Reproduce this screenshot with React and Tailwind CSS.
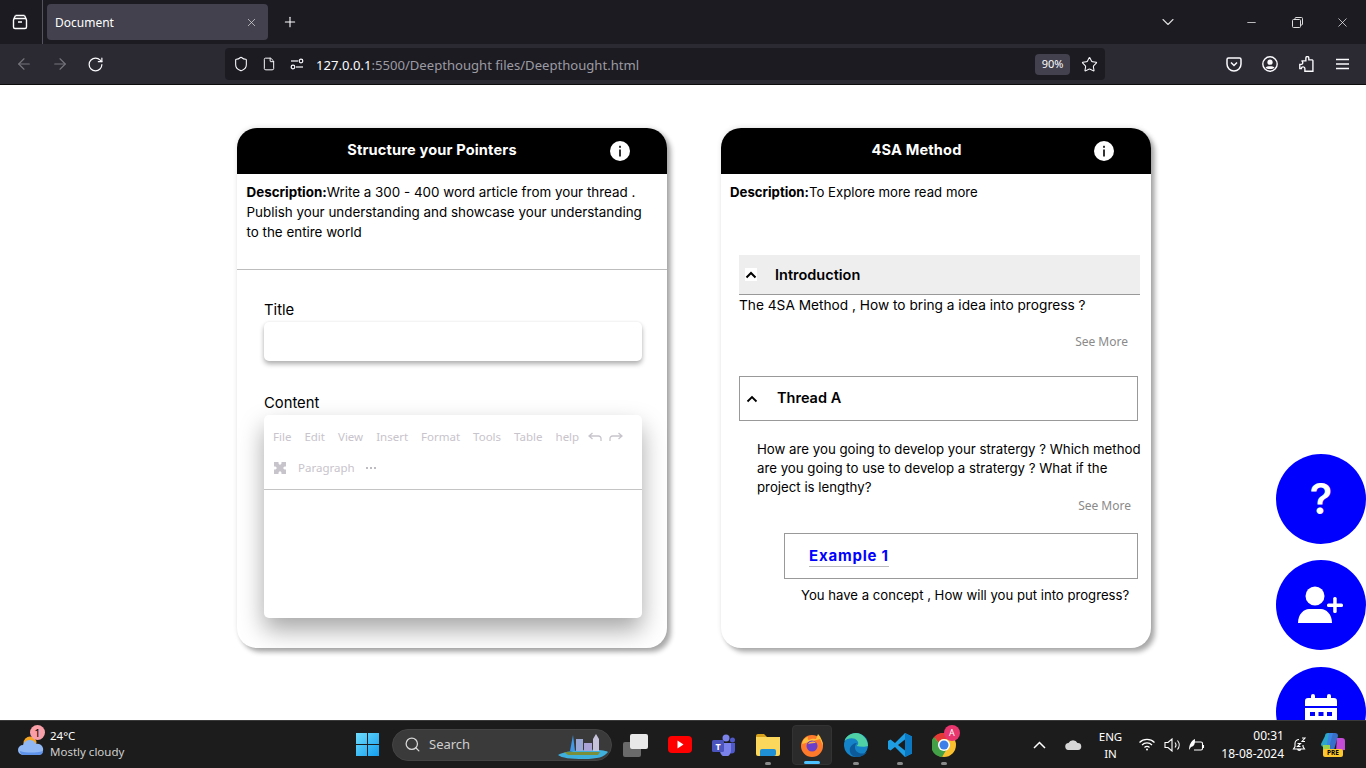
import React from "react";
import { ArrowLeft, ArrowRight, RotateCw, X, Plus, ChevronDown, Minus, Shield, File, Star, Search } from "lucide-react";

const sans = "font-['Inter','Liberation_Sans',sans-serif]";
const ui = "font-['Noto_Sans','Liberation_Sans',sans-serif]";

const Info = () => (
  <svg width="20" height="20" viewBox="0 0 20 20" className="shrink-0">
    <circle cx="10" cy="10" r="10" fill="#fff" />
    <rect x="9.200" y="8.500" width="1.600" height="7" fill="#000" />
    <rect x="9.200" y="4.800" width="1.600" height="2" fill="#000" />
  </svg>
);
const Chev = ({ w = 2 }) => (
  <svg width="12" height="8" viewBox="0 0 12 8" fill="none" stroke="#000" strokeWidth={w}><path d="M1.500 6.500 6 2l4.500 4.500" /></svg>
);

function CardHead({ title, pl }) {
  return (
    <div className="h-[46px] bg-black flex items-center pr-[37px] rounded-t-[20px] shrink-0" style={{ paddingLeft: pl }}>
      <div className="flex-1 text-center text-white text-[14.600px] font-bold tracking-[0.150px] pb-[1px]">{title}</div>
      <Info />
    </div>
  );
}

const Tab = ({ children }) => <span>{children}</span>;

function Browser() {
  return (
    <div className={`${ui} shrink-0`}>
      <div className="h-[44px] bg-[#1c1b22] flex items-center text-white">
        <div className="w-[43px] h-full border-r border-[#55545c] flex items-center justify-center pr-[3px] shrink-0">
          <svg width="18" height="18" viewBox="0 0 18 18" fill="none" stroke="#fff" strokeWidth="1.400"><rect x="2.500" y="5.500" width="13" height="10" rx="1.500" /><path d="M4.500 2.500h9M7 9h4" /><path d="M3 5.500 4.500 2.500M15 5.500l-1.500-3" /></svg>
        </div>
        <div className="ml-[4px] w-[221px] h-[36px] bg-[#42414d] rounded-[4px] flex items-center justify-between pl-[8px] pr-[10px] text-[12px] shrink-0">
          <span className="pt-[1px]">Document</span>
          <X size={13} strokeWidth={1.300} color="#ddd" />
        </div>
        <Plus size={16} strokeWidth={1.600} className="ml-[14px]" />
        <div className="flex-1" />
        <ChevronDown size={20} strokeWidth={1.300} color="#ddd" className="mr-[67px]" />
        <Minus size={13} strokeWidth={1.300} className="mr-[33px]" />
        <svg width="13" height="13" viewBox="0 0 13 13" fill="none" stroke="#ddd" className="mr-[31px]"><rect x="1.500" y="3.500" width="8" height="8" rx="1" /><path d="M4 3.500V2.500a1 1 0 0 1 1-1h5.500a1 1 0 0 1 1 1V8a1 1 0 0 1-1 1H9.500" /></svg>
        <X size={15} strokeWidth={1.100} className="mr-[16px]" />
      </div>
      <div className="h-[41px] bg-[#2b2a33] flex items-center border-b border-[#0c0c0d]">
        <ArrowLeft size={18} strokeWidth={1.500} color="#76757c" className="ml-[15px]" />
        <ArrowRight size={18} strokeWidth={1.500} color="#76757c" className="ml-[18px]" />
        <RotateCw size={17} strokeWidth={1.700} color="#fbfbfe" className="ml-[18px]" />
        <div className="ml-[121px] w-[880px] h-[32px] bg-[#1c1b22] rounded-[4px] flex items-center shrink-0">
          <Shield size={16} strokeWidth={1.600} color="#fbfbfe" className="ml-[8px]" />
          <File size={14} strokeWidth={1.700} color="#fbfbfe" className="ml-[13px]" />
          <svg width="14" height="12" viewBox="0 0 14 12" fill="none" stroke="#fbfbfe" strokeWidth="1.200" className="ml-[14px]"><circle cx="11" cy="3" r="1.800" /><path d="M1 3h7" /><circle cx="3" cy="9" r="1.800" /><path d="M6 9h7" /></svg>
          <span className="ml-[12px] pt-[3px] text-[13.100px] text-[#fbfbfe] whitespace-nowrap">127.0.0.1<span className="text-[#9c9ba3]">:5500/Deepthought files/Deepthought.html</span></span>
          <div className="flex-1" />
          <div className="w-[35px] h-[21px] bg-[#42414d] rounded-[4px] text-[11px] text-[#fbfbfe] flex items-center justify-center">90%</div>
          <Star size={17} strokeWidth={1.500} color="#fbfbfe" className="ml-[11px] mr-[7px]" />
        </div>
        <svg width="16" height="15" viewBox="0 0 16 15" fill="none" stroke="#fbfbfe" strokeWidth="1.500" className="ml-[121px]"><path d="M1 2.500A1.500 1.500 0 0 1 2.500 1h11A1.500 1.500 0 0 1 15 2.500V7a7 7 0 0 1-14 0z" /><path d="m5 5.500 3 3 3-3" /></svg>
        <svg width="16" height="16" viewBox="0 0 16 16" className="ml-[20px]"><circle cx="8" cy="8" r="7.200" fill="none" stroke="#fbfbfe" strokeWidth="1.400" /><circle cx="8" cy="6.200" r="2.600" fill="#fbfbfe" /><path d="M3.500 11.500C5 9.800 11 9.800 12.500 11.500 11 13.600 5 13.600 3.500 11.500z" fill="#fbfbfe" /></svg>
        <svg width="15" height="16" viewBox="0 0 15 16" fill="none" stroke="#fbfbfe" strokeWidth="1.400" className="ml-[21px]"><path d="M7 1.500a1.500 1.500 0 0 1 3 0v2h3.500a1 1 0 0 1 .7.700V15H6V12.500a1.800 1.800 0 0 0-3.600-.2H.8V8h1.700a1.800 1.800 0 0 0 0-3.500H7z" transform="translate(0 .5) scale(.98)" /></svg>
        <svg width="13" height="12" viewBox="0 0 13 12" stroke="#fbfbfe" strokeWidth="1.400" className="ml-[22px]"><path d="M0 1.500h13M0 6h13M0 10.500h13" /></svg>
      </div>
    </div>
  );
}

function LeftCard() {
  return (
    <div className="w-[430px] h-[520px] bg-white rounded-[20px] shadow-[4px_4px_5px_rgba(0,0,0,0.32),0_-1px_5px_rgba(0,0,0,0.1)] flex flex-col shrink-0">
      <CardHead title="Structure your Pointers" pl={17} />
      <div className="pl-[9.500px] pr-[16px] pt-[8px] h-[96px] border-b border-[#bdbdbd] text-[13.400px] leading-[20px] text-black shrink-0">
        <b className="font-bold">Description:</b>Write a 300 - 400 word article from your thread . Publish your understanding and showcase your understanding to the entire world
      </div>
      <div className="pl-[27px] pt-[30px]">
        <div className="text-[14.800px] leading-[20px] text-black">Title</div>
        <div className="mt-[2px] w-[378px] h-[39px] rounded-[5px] bg-white shadow-[0_3px_5px_rgba(0,0,0,0.32),0_-1px_2px_rgba(0,0,0,0.03)]" />
        <div className="mt-[32px] text-[14.800px] leading-[20px] text-black">Content</div>
        <div className={`${ui} mt-[2px] w-[378px] h-[203px] rounded-[5px] bg-white shadow-[0_12px_24px_rgba(0,0,0,0.35)] text-[11.500px] text-[#c8c4cc]`}>
          <div className="h-[75px] border-b border-[#c4c4c4] pl-[9px]">
            <div className="h-[43px] flex items-center gap-[13px] whitespace-nowrap">
              <Tab>File</Tab><Tab>Edit</Tab><Tab>View</Tab><Tab>Insert</Tab><Tab>Format</Tab><Tab>Tools</Tab><Tab>Table</Tab><span className="-mr-[4px]">help</span>
              <svg width="14" height="10" viewBox="0 0 14 10" fill="none" stroke="#c8c4cc" strokeWidth="1.300"><path d="M4.500 1 1 4l3.500 3M1 4h9.500A2.500 2.500 0 0 1 13 6.500V9" /></svg>
              <svg width="14" height="10" viewBox="0 0 14 10" fill="none" stroke="#c8c4cc" strokeWidth="1.300" className="-ml-[6px]"><path d="M9.500 1 13 4 9.500 7M13 4H3.500A2.500 2.500 0 0 0 1 6.500V9" /></svg>
            </div>
            <div className="mt-[1px] h-[18px] flex items-center whitespace-nowrap">
              <svg width="12" height="12" viewBox="0 0 12 12" fill="#c8c4cc" className="ml-[1px]"><path d="M0 0h4.500v1.500L6 3l1.500-1.500V0H12v4.500h-1.500L9 6l1.500 1.500H12V12H7.500v-1.500L6 9l-1.500 1.500V12H0V7.500h1.500L3 6 1.500 4.500H0z" /></svg>
              <span className="ml-[12px]">Paragraph</span>
              <span className="ml-[11px] flex gap-[1.500px]"><i className="w-[2.500px] h-[2.500px] rounded-full bg-[#a8a4ac]" /><i className="w-[2.500px] h-[2.500px] rounded-full bg-[#a8a4ac]" /><i className="w-[2.500px] h-[2.500px] rounded-full bg-[#a8a4ac]" /></span>
            </div>
          </div>
        </div>
      </div>
    </div>
  );
}

function SeeMore({ className }) {
  return <div className={`${ui} text-[12px] text-[#8a8a8a] text-right leading-[16px] ${className}`}>See More</div>;
}

function RightCard() {
  return (
    <div className="w-[430px] h-[520px] bg-white rounded-[20px] shadow-[4px_4px_5px_rgba(0,0,0,0.32),0_-1px_5px_rgba(0,0,0,0.1)] flex flex-col shrink-0">
      <CardHead title="4SA Method" pl={18} />
      <div className="pl-[9px] pt-[8px] h-[81px] text-[13.200px] leading-[20px] text-black shrink-0">
        <b className="font-bold">Description:</b>To Explore more read more
      </div>
      <div className="pl-[18px]">
        <div className="w-[401px] h-[40px] bg-[#eeeeee] border-b border-[#999] flex items-center pl-[6px]">
          <span className="w-[12px] h-[13px] bg-white flex items-center justify-center"><Chev /></span>
          <span className="ml-[18px] text-[14.500px] font-semibold text-black">Introduction</span>
        </div>
        <div className="h-[20px] leading-[20px] text-[13.700px] text-black">The 4SA Method , How to bring a idea into progress ?</div>
        <SeeMore className="w-[389px] mt-[19px]" />
        <div className="mt-[26px] w-[399px] h-[45px] border border-[#999] flex items-center pl-[6px]">
          <Chev w={1.800} />
          <span className="ml-[19px] pb-[2px] text-[14.500px] font-semibold text-black">Thread A</span>
        </div>
        <div className="mt-[19px] ml-[18px] w-[390px] text-[13.250px] leading-[19px] text-black">How are you going to develop your stratergy ? Which method are you going to use to develop a stratergy ? What if the project is lengthy?</div>
        <SeeMore className="w-[392px] mt-[1px]" />
        <div className="mt-[19px] ml-[45px] w-[354px] h-[46px] border border-[#999] flex items-center pl-[24px]">
          <span className="text-[15px] leading-[20px] font-bold text-[#0000ff] tracking-[0.800px] border-b border-[#bbb]">Example 1</span>
        </div>
        <div className="mt-[6px] ml-[62px] h-[20px] leading-[20px] text-[13.150px] text-black whitespace-nowrap">You have a concept , How will you put into progress?</div>
      </div>
    </div>
  );
}

function Fab({ top, children }) {
  return <div className="absolute left-[1276px] w-[90px] h-[90px] rounded-full bg-[#0000ff] flex items-center justify-center" style={{ top }}>{children}</div>;
}

function Dot() {
  return <div className="absolute left-1/2 -translate-x-1/2 bottom-0 w-[6px] h-[3px] rounded-full bg-[#8a8a8a]" />;
}

function Slot({ w = 24, ml, children, dot }) {
  return <div className="relative h-[40px] flex items-center justify-center shrink-0" style={{ width: w, marginLeft: ml }}>{children}{dot && <Dot />}</div>;
}

function Taskbar() {
  return (
    <div className={`${ui} h-[48px] bg-[#1c1c1c] border-t border-[#3a3a3a] flex items-center text-white shrink-0 relative`}>
      <div className="relative ml-[18px] w-[28px] h-[28px] shrink-0">
        <svg width="28" height="28" viewBox="0 0 28 28"><circle cx="12" cy="12" r="6.500" fill="#f5a524" /><path d="M5 24a5 5 0 0 1 0-10 7 7 0 0 1 13-1 5.500 5.500 0 0 1 3 11z" fill="#8fb8f5" /><path d="M2 20c6 2 16 2 23 0v1a4 4 0 0 1-4 3H5a4 4 0 0 1-3-4z" fill="#5f93ea" /></svg>
        <div className="absolute -top-[6px] left-[12px] w-[15px] h-[15px] rounded-full bg-[#f99fa8] text-black text-[11px] leading-[15px] text-center">1</div>
      </div>
      <div className="ml-[4px] w-[100px] text-[11.500px] leading-[16px] pb-[1px] shrink-0"><div>24°C</div><div className="text-[#cfcfcf]">Mostly cloudy</div></div>
      <svg width="23" height="23" viewBox="0 0 23 23" className="ml-[206px] shrink-0"><defs><linearGradient id="w" x1="0" y1="0" x2="1" y2="1"><stop offset="0" stopColor="#6fdcfb" /><stop offset="1" stopColor="#129ef0" /></linearGradient></defs><path fill="url(#w)" d="M0 0h11v11H0zM12 0h11v11H12zM0 12h11v11H0zM12 12h11v11H12z" /></svg>
      <div className="ml-[13px] w-[220px] h-[32px] rounded-full bg-[#3a3a3a] border border-[#444] flex items-center pl-[11px] pr-[3px] shrink-0">
        <Search size={17} strokeWidth={1.800} color="#d8d8d8" />
        <span className="ml-[8px] text-[13px] text-[#cfcfcf]">Search</span>
        <div className="flex-1" />
        <svg width="50" height="28" viewBox="0 0 50 28"><path d="M0 24c8-5 42-7 50-3-4 5-10 7-24 7C12 28 4 27 0 24z" fill="#3fb0dc" /><path d="M6 21h36l-2 3H10z" fill="#7b8f3a" /><path d="M12 20 15 4l2 16z" fill="#3f97e6" /><rect x="18" y="8" width="7" height="12" fill="#9aa8d8" /><rect x="26" y="12" width="8" height="8" fill="#a9a3d8" /><path d="M35 20V8l3-5 3 5v12z" fill="#c6c2dc" /></svg>
      </div>
      <Slot ml={11} w={26}><svg width="26" height="24" viewBox="0 0 26 24"><rect x="0" y="9" width="18" height="15" rx="2" fill="#6a6a6a" /><rect x="7" y="1" width="18" height="15" rx="2" fill="#e8e8e8" /></svg></Slot>
      <Slot ml={19}><svg width="24" height="17" viewBox="0 0 24 17"><rect width="24" height="17" rx="4" fill="#f00" /><path d="m9.500 4.500 6 4-6 4z" fill="#fff" /></svg></Slot>
      <Slot ml={20} dot={false}><svg width="24" height="22" viewBox="0 0 24 22"><circle cx="14" cy="4" r="3.500" fill="#7b83eb" /><circle cx="20.500" cy="6" r="2.500" fill="#5059c9" /><path d="M16 9h7v7a3.500 3.500 0 0 1-7 0z" fill="#5059c9" /><path d="M8 9h11v8a5 5 0 0 1-11 0z" fill="#7b83eb" /><rect x="0" y="6" width="12" height="12" rx="1.500" fill="#4b53bc" /><text x="6" y="15.500" fontSize="9" fontWeight="700" fill="#fff" textAnchor="middle">T</text></svg></Slot>
      <Slot ml={20} dot><svg width="24" height="22" viewBox="0 0 24 22"><path d="M0 2a2 2 0 0 1 2-2h6l3 3H0z" fill="#d9a21b" /><path d="M0 3h24v17a2 2 0 0 1-2 2H2a2 2 0 0 1-2-2z" fill="#fbd75b" /><path d="M8 22v-5a2 2 0 0 1 2-2h12a2 2 0 0 1 2 2v3a2 2 0 0 1-2 2z" fill="#1f8fd6" transform="translate(-4 0)" /></svg></Slot>
      <div className="relative ml-[12px] w-[40px] h-[40px] rounded-[4px] bg-[#2b2b2b] border border-[#333] flex items-center justify-center shrink-0">
        <svg width="24" height="24" viewBox="0 0 24 24"><circle cx="12" cy="13" r="11" fill="#ff7a2b" /><path d="M2 11C3 6 6 4 8 4c-1 2 0 3 1 3 3-2 6-1 7-1l2-5c3 3 5 8 5 12L20 6 9 9z" fill="#ffc13d" /><circle cx="12" cy="13" r="5.500" fill="#6b3fc9" /><path d="M8 11c2-3 6-3 8-1-2 0-5 0-8 1z" fill="#ffb040" /></svg>
        <div className="absolute left-1/2 -translate-x-1/2 bottom-0 w-[16px] h-[3px] rounded-full bg-[#4cc2ff]" />
      </div>
      <Slot ml={12} dot><svg width="24" height="24" viewBox="0 0 24 24"><circle cx="12" cy="12" r="12" fill="#1583c7" /><path d="M24 13C24 6 18 0 12 0 6 0 1.500 4 .500 8c3-3 10-4 13 0 1.500 2 .5 4-1 5 4 1 9 1 11.500 0z" fill="#4fd1a5" /><path d="M12 24c-5-1-7-5-6-9 1-3 4-5 7-5-3 2-3 8 2 10 3 1 6 .5 8-1-2 3-6 5-11 5z" fill="#0c5a99" /></svg></Slot>
      <Slot ml={20} dot><svg width="24" height="24" viewBox="0 0 24 24"><path d="M17 0 24 3.500v17L17 24 7 14l-4.500 3.500L0 16v-8l2.500-1.500L7 10z" fill="#1e9de3" /><path d="M17 6.500 10 12l7 5.500z" fill="#1c1c1c" /><path d="M17 0 24 3.500v17L17 24z" fill="#0a78c2" /></svg></Slot>
      <Slot ml={20} dot><div className="relative w-[24px] h-[24px]"><svg width="24" height="24" viewBox="0 0 24 24"><circle cx="12" cy="12" r="12" fill="#fbc02d" /><path d="M12 0a12 12 0 0 1 10.400 6H12a6 6 0 0 0-5.500 3.500L2 4a12 12 0 0 1 10-4z" fill="#e53935" /><path d="M2 4a12 12 0 0 0 8 20l4.500-7.500A6 6 0 0 1 6.500 9.500z" fill="#43a047" /><circle cx="12" cy="12" r="6" fill="#fff" /><circle cx="12" cy="12" r="4.500" fill="#3d7ee8" /></svg><div className="absolute -top-[8px] left-[12px] w-[16px] h-[16px] rounded-full bg-[#e9366f] text-white text-[9px] leading-[16px] text-center">A</div></div></Slot>
      <svg width="13" height="8" viewBox="0 0 13 8" fill="none" stroke="#fff" strokeWidth="1.500" className="ml-[77px] shrink-0"><path d="M1 7 6.500 1.500 12 7" /></svg>
      <svg width="17" height="11" viewBox="0 0 17 11" className="ml-[19px] shrink-0"><path d="M4 11a3.500 3.500 0 0 1-.5-7A5 5 0 0 1 12.500 4 3.500 3.500 0 0 1 13 11z" fill="#d5d5d5" /></svg>
      <div className="ml-[15px] w-[27px] text-center text-[11.500px] leading-[17px] shrink-0"><div>ENG</div><div>IN</div></div>
      <svg width="16" height="13" viewBox="0 0 16 13" fill="none" stroke="#fff" strokeWidth="1.200" className="ml-[15px] shrink-0"><path d="M.5 4.500a10.500 10.500 0 0 1 15 0M3 7a7 7 0 0 1 10 0M5.500 9.500a3.500 3.500 0 0 1 5 0" /><circle cx="8" cy="11.500" r="1" fill="#fff" stroke="none" /></svg>
      <svg width="17" height="14" viewBox="0 0 17 14" fill="none" stroke="#fff" strokeWidth="1.100" className="ml-[9px] shrink-0"><path d="M1 4.500h3L8 1v12L4 9.500H1zM11 4.500a4 4 0 0 1 0 5M13.500 2.500a7 7 0 0 1 0 9" /></svg>
      <svg width="17" height="14" viewBox="0 0 17 14" fill="none" stroke="#fff" strokeWidth="1.100" className="ml-[7px] shrink-0"><path d="M5 4h8a1.500 1.500 0 0 1 1.500 1.500v5A1.500 1.500 0 0 1 13 12H6M15.500 7v3" /><path d="M1 12c0-5 2-9 6-11 0 4 0 7-4 8z" fill="#fff" stroke="none" /></svg>
      <div className="ml-[9px] w-[70px] text-right text-[12px] leading-[18px] shrink-0"><div>00:31</div><div>18-08-2024</div></div>
      <svg width="15" height="16" viewBox="0 0 15 16" fill="none" stroke="#fff" strokeWidth="1.100" className="ml-[8px] shrink-0"><path d="M7 2.500A4 4 0 0 0 3 6.500v3L1.500 12h11L11 9.500V8M5.500 12a1.800 1.800 0 0 0 3.500 0M5.500 6.500h3l-3 3h3M10 1h3l-3 3.500h3" /></svg>
      <div className="relative ml-[14px] w-[24px] h-[24px] shrink-0">
        <svg width="24" height="22" viewBox="0 0 24 22"><path d="M4 3a3 3 0 0 1 3-3h5l-4 14H3a3 3 0 0 1-3-3z" fill="#2aa7c9" /><path d="M8 0h6a3 3 0 0 1 3 3l-4 14H5z" fill="#3d7eea" opacity=".85" /><path d="M16 5h5a3 3 0 0 1 3 3v9l-9 1z" fill="#c44bd6" /><path d="M2 12h7v6H2z" fill="#9ad24c" /></svg>
        <div className="absolute bottom-0 left-[2px] w-[20px] h-[8px] rounded-[2px] bg-[#fdc72e] text-black text-[6.500px] leading-[8px] font-bold text-center">PRE</div>
      </div>
    </div>
  );
}

export default function App() {
  return (
    <div className={`${sans} w-[1366px] h-[768px] overflow-hidden flex flex-col bg-white`}>
      <Browser />
      <div className="relative flex-1 overflow-hidden">
        <div className="pl-[237px] pt-[43px] flex gap-[54px]">
          <LeftCard />
          <RightCard />
        </div>
        <Fab top={369}>
          <span className="text-white text-[42px] font-semibold leading-none">?</span>
        </Fab>
        <Fab top={475}>
          <svg width="46" height="38" viewBox="0 0 46 38" fill="#fff"><circle cx="17" cy="10" r="9.500" /><path d="M0 37c0-9 6-14 11-14h12c5 0 11 5 11 14z" /><rect x="29" y="17.500" width="16" height="3.500" rx="1.500" /><rect x="35.200" y="11" width="3.500" height="16" rx="1.500" /></svg>
        </Fab>
        <Fab top={582}>
          <svg width="32" height="36" viewBox="0 0 32 36" fill="#fff"><path d="M3 4h26a3 3 0 0 1 3 3v5H0V7a3 3 0 0 1 3-3zM0 14h32v19a3 3 0 0 1-3 3H3a3 3 0 0 1-3-3z" /><rect x="6" y="0" width="4" height="8" rx="2" /><rect x="22" y="0" width="4" height="8" rx="2" /><g fill="#0000ff"><rect x="5" y="18" width="5" height="4" /><rect x="13.500" y="18" width="5" height="4" /><rect x="22" y="18" width="5" height="4" /></g></svg>
        </Fab>
      </div>
      <Taskbar />
    </div>
  );
}
